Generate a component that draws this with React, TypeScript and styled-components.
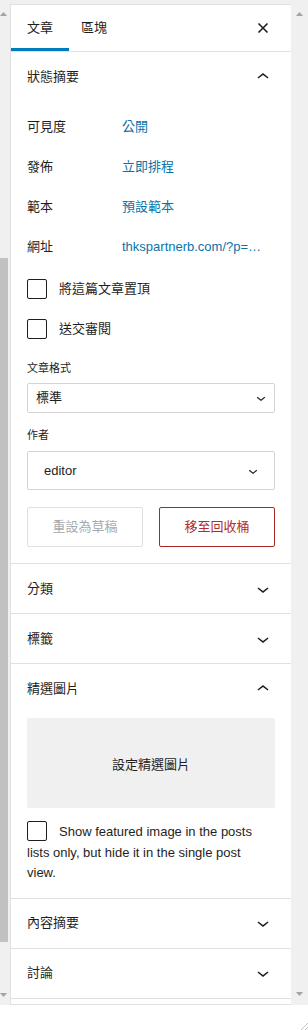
import React from "react";
import styled, { createGlobalStyle } from "styled-components";

const GlobalStyle = createGlobalStyle`
  html, body { margin: 0; padding: 0; background: #ffffff; }
  body {
    font-family: "Liberation Sans", "Noto Sans CJK TC", sans-serif;
    font-size: 13px;
    color: #1e1e1e;
  }
  * { box-sizing: border-box; }
`;

const Page = styled.div`
  width: 308px;
  height: 1030px;
  display: flex;
  flex-direction: column;
  overflow: hidden;
`;

const Frame = styled.div`
  display: flex;
  height: 1005px;
  background: #f0f0f0;
`;

const ScrollTrack = styled.div<{ $width: number; $align: string }>`
  width: ${(p) => p.$width}px;
  flex: none;
  display: flex;
  flex-direction: column;
  align-items: ${(p) => p.$align};
  background: #f0f0f0;
`;

const ArrowIcon = styled.svg<{ $mt?: number; $mb?: number }>`
  display: block;
  flex: none;
  margin-top: ${(p) => p.$mt ?? 0}px;
  margin-bottom: ${(p) => p.$mb ?? 0}px;
`;

const Thumb = styled.div<{ $top: number; $height: number }>`
  width: 8px;
  margin-top: ${(p) => p.$top}px;
  height: ${(p) => p.$height}px;
  background: #c1c1c1;
`;

const Spacer = styled.div`
  flex: 1;
`;

const Panel = styled.div`
  width: 281px;
  flex: none;
  margin-top: 4px;
  height: 1001px;
  background: #ffffff;
  border-left: 1px solid #e0e0e0;
  border-top: 1px solid #e0e0e0;
  border-bottom: 1px solid #e0e0e0;
  overflow: hidden;
  display: flex;
  flex-direction: column;
`;

const Header = styled.div`
  height: 47px;
  flex: none;
  display: flex;
  align-items: stretch;
  justify-content: space-between;
  border-bottom: 1px solid #e0e0e0;
  padding-right: 16px;
`;

const Tabs = styled.div`
  display: flex;
  align-items: stretch;
`;

const Tab = styled.div<{ $active?: boolean; $pad: string }>`
  display: flex;
  align-items: center;
  padding: ${(p) => p.$pad};
  font-size: 13px;
  line-height: 16px;
  color: #1e1e1e;
  box-shadow: ${(p) => (p.$active ? "inset 0 -3px 0 #007cba" : "none")};
`;

const IconBox = styled.div`
  width: 24px;
  height: 24px;
  align-self: center;
  display: flex;
  align-items: center;
  justify-content: center;
`;

const Section = styled.div<{ $first?: boolean }>`
  flex: none;
  border-top: ${(p) => (p.$first ? "none" : "1px solid #e0e0e0")};
`;

const SectionTitle = styled.div`
  height: 49px;
  display: flex;
  align-items: center;
  justify-content: space-between;
  padding: 0 16px;
  font-size: 13px;
  line-height: 16px;
  color: #1e1e1e;
`;

const Body = styled.div<{ $pt: number; $pb: number }>`
  padding: ${(p) => p.$pt}px 16px ${(p) => p.$pb}px;
`;

const InfoRow = styled.div`
  display: grid;
  grid-template-columns: 95px 1fr;
  align-items: center;
  height: 40px;
  line-height: 16px;
`;

const InfoLabel = styled.span`
  color: #1e1e1e;
`;

const InfoValue = styled.span`
  color: #0a74a8;
  white-space: nowrap;
  overflow: hidden;
`;

const CheckRow = styled.div<{ $mt?: number }>`
  height: 40px;
  display: flex;
  align-items: center;
  gap: 12px;
  margin-top: ${(p) => p.$mt ?? 0}px;
  line-height: 16px;
`;

const CheckBox = styled.span`
  display: inline-block;
  width: 20px;
  height: 20px;
  flex: none;
  border: 1px solid #1e1e1e;
  border-radius: 2px;
  background: #fff;
`;

const FieldLabel = styled.div<{ $mt: number }>`
  margin-top: ${(p) => p.$mt}px;
  font-size: 11px;
  line-height: 16px;
  color: #1e1e1e;
`;

const SelectBox = styled.div<{ $h: number; $pl: number; $pr: number }>`
  margin-top: ${(p) => (p.$h > 35 ? 8 : 7)}px;
  height: ${(p) => p.$h}px;
  border: 1px solid #d4d4d4;
  border-radius: 2px;
  display: flex;
  align-items: center;
  justify-content: space-between;
  padding: 0 ${(p) => p.$pr}px 0 ${(p) => p.$pl}px;
  font-size: 13px;
  line-height: 16px;
  color: #1e1e1e;
`;

const ButtonRow = styled.div`
  margin-top: 17px;
  display: grid;
  grid-template-columns: 1fr 1fr;
  gap: 16px;
`;

const ActionButton = styled.div<{ $danger?: boolean }>`
  height: 40px;
  display: flex;
  align-items: center;
  justify-content: center;
  border-radius: 2px;
  font-size: 13px;
  line-height: 16px;
  background: #fff;
  border: 1px solid ${(p) => (p.$danger ? "#a82727" : "#e0e0e0")};
  color: ${(p) => (p.$danger ? "#b32d2e" : "#a7aaad")};
`;

const Placeholder = styled.div`
  height: 90px;
  background: #f0f0f0;
  border-radius: 2px;
  display: flex;
  align-items: center;
  justify-content: center;
  font-size: 13px;
  color: #1e1e1e;
`;

const Note = styled.p`
  margin: 13px 0 0;
  padding-right: 4px;
  font-size: 13px;
  line-height: 20.5px;
  color: #1e1e1e;
`;

const InlineBox = styled(CheckBox)`
  vertical-align: -5px;
  margin-right: 12px;
`;

const Footer = styled.div`
  height: 25px;
  background: #ffffff;
  display: flex;
  justify-content: flex-end;
  align-items: flex-end;
`;

const ChevronUp = ({ size = 24 }: { size?: number }) => (
  <svg width={size} height={size} viewBox="0 0 24 24" fill="#1e1e1e">
    <path d="M6.5 12.4L12 8l5.5 4.4-.9 1.2L12 10l-4.6 3.6-1-1.2z" />
  </svg>
);

const ChevronDown = ({ size = 24 }: { size?: number }) => (
  <svg width={size} height={size} viewBox="0 0 24 24" fill="#1e1e1e">
    <path d="M17.5 11.6L12 16l-5.5-4.4.9-1.2L12 14l4.6-3.6 1 1.2z" />
  </svg>
);

const CloseIcon = () => (
  <svg width="24" height="24" viewBox="0 0 24 24">
    <path d="M7.5 7.5L16.5 16.5M16.5 7.5L7.5 16.5" stroke="#1e1e1e" strokeWidth="1.6" />
  </svg>
);

const UpArrow = ({ mt }: { mt: number }) => (
  <ArrowIcon $mt={mt} width="7" height="4" viewBox="0 0 7 4">
    <path d="M3.5 0L7 4H0z" fill="#a3a3a3" />
  </ArrowIcon>
);

const DownArrow = ({ mb }: { mb: number }) => (
  <ArrowIcon $mb={mb} width="7" height="4" viewBox="0 0 7 4">
    <path d="M0 0H7L3.5 4z" fill="#a3a3a3" />
  </ArrowIcon>
);

const Grip = () => (
  <svg width="8" height="8" viewBox="0 0 8 8">
    <path d="M8 1L1 8M8 5L5 8" stroke="#c4c4c4" strokeWidth="1" />
  </svg>
);

const Collapsed = ({ title }: { title: string }) => (
  <Section>
    <SectionTitle>
      <span>{title}</span>
      <IconBox>
        <ChevronDown />
      </IconBox>
    </SectionTitle>
  </Section>
);

const info = [
  ["可見度", "公開"],
  ["發佈", "立即排程"],
  ["範本", "預設範本"],
  ["網址", "thkspartnerb.com/?p=…"],
];

export default function App() {
  return (
    <Page>
      <GlobalStyle />
      <Frame>
        <ScrollTrack $width={10} $align="flex-start">
          <UpArrow mt={12} />
          <Thumb $top={242} $height={684} />
          <Spacer />
          <DownArrow mb={8} />
        </ScrollTrack>
        <Panel>
          <Header>
            <Tabs>
              <Tab $active $pad="0 16px">文章</Tab>
              <Tab $pad="0 12px">區塊</Tab>
            </Tabs>
            <IconBox>
              <CloseIcon />
            </IconBox>
          </Header>

          <Section $first>
            <SectionTitle>
              <span>狀態摘要</span>
              <IconBox>
                <ChevronUp />
              </IconBox>
            </SectionTitle>
            <Body $pt={6} $pb={16}>
              {info.map(([k, v]) => (
                <InfoRow key={k}>
                  <InfoLabel>{k}</InfoLabel>
                  <InfoValue>{v}</InfoValue>
                </InfoRow>
              ))}
              <CheckRow $mt={2}>
                <CheckBox />
                <span>將這篇文章置頂</span>
              </CheckRow>
              <CheckRow>
                <CheckBox />
                <span>送交審閱</span>
              </CheckRow>
              <FieldLabel $mt={11}>文章格式</FieldLabel>
              <SelectBox $h={30} $pl={8} $pr={4}>
                <span>標準</span>
                <ChevronDown size={18} />
              </SelectBox>
              <FieldLabel $mt={14}>作者</FieldLabel>
              <SelectBox $h={39} $pl={16} $pr={12}>
                <span>editor</span>
                <ChevronDown size={18} />
              </SelectBox>
              <ButtonRow>
                <ActionButton>重設為草稿</ActionButton>
                <ActionButton $danger>移至回收桶</ActionButton>
              </ButtonRow>
            </Body>
          </Section>

          <Collapsed title="分類" />
          <Collapsed title="標籤" />

          <Section>
            <SectionTitle>
              <span>精選圖片</span>
              <IconBox>
                <ChevronUp />
              </IconBox>
            </SectionTitle>
            <Body $pt={5} $pb={14}>
              <Placeholder>設定精選圖片</Placeholder>
              <Note>
                <InlineBox />
                Show featured image in the posts lists only, but hide it in the single post view.
              </Note>
            </Body>
          </Section>

          <Collapsed title="內容摘要" />
          <Collapsed title="討論" />
          <Section />
        </Panel>
        <ScrollTrack $width={17} $align="center">
          <UpArrow mt={12} />
          <Spacer />
          <DownArrow mb={9} />
        </ScrollTrack>
      </Frame>
      <Footer>
        <Grip />
      </Footer>
    </Page>
  );
}
